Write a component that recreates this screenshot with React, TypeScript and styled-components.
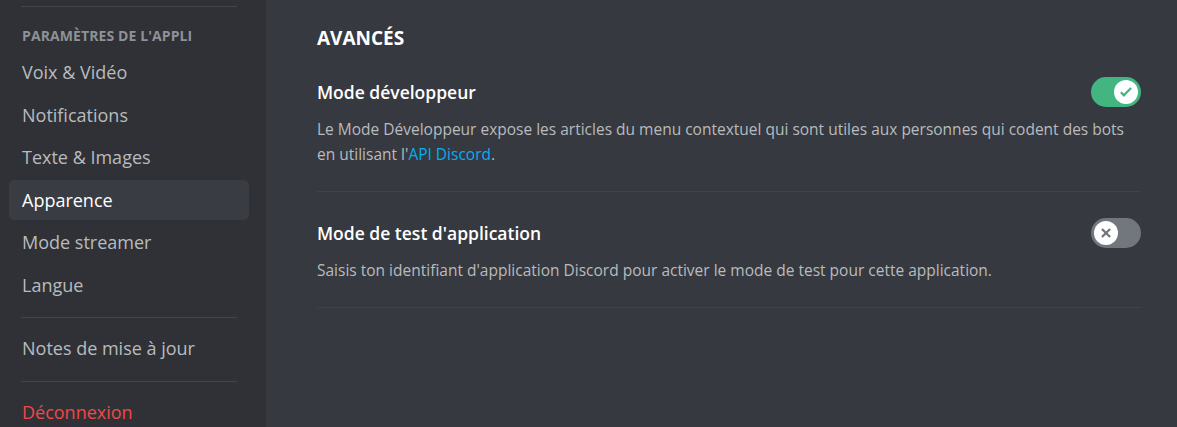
import React from 'react';
import styled, { createGlobalStyle } from 'styled-components';

const GlobalStyle = createGlobalStyle`
    html, body {
        margin: 0;
        padding: 0;
        height: 100%;
        background: #36393f;
    }
    #root {
        height: 100%;
    }
    * {
        box-sizing: border-box;
    }
`;

type NavItem = {
    label: string;
    selected?: boolean;
    danger?: boolean;
};

const appItems: NavItem[] = [
    { label: 'Voix & Vidéo' },
    { label: 'Notifications' },
    { label: 'Texte & Images' },
    { label: 'Apparence', selected: true },
    { label: 'Mode streamer' },
    { label: 'Langue' },
];

const CheckIcon = (
    <svg width='20' height='20' viewBox='0 0 20 20' fill='#43b581'>
        <path d='M7.89561 14.8538L6.30462 13.2629L14.3099 5.25755L15.9009 6.84854L7.89561 14.8538Z' />
        <path d='M4.08643 11.0903L5.67742 9.49929L9.4485 13.2704L7.85751 14.8614L4.08643 11.0903Z' />
    </svg>
);

const CrossIcon = (
    <svg width='20' height='20' viewBox='0 0 20 20' fill='#72767d'>
        <path d='M5.13231 6.72963L6.7233 5.13864L14.855 13.2704L13.264 14.8614L5.13231 6.72963Z' />
        <path d='M13.2704 5.13864L14.8614 6.72963L6.72963 14.8614L5.13864 13.2704L13.2704 5.13864Z' />
    </svg>
);

const Toggle: React.FunctionComponent<{ on: boolean }> = ({ on }) => (
    <Switch on={on}>
        <Knob>{on ? CheckIcon : CrossIcon}</Knob>
    </Switch>
);

type SettingProps = {
    title: string;
    on: boolean;
    children: React.ReactNode;
};

const Setting: React.FunctionComponent<SettingProps> = ({ title, on, children }) => (
    <SettingBlock>
        <SettingRow>
            <SettingTitle>{title}</SettingTitle>
            <Toggle on={on} />
        </SettingRow>
        <SettingNote>{children}</SettingNote>
    </SettingBlock>
);

export default function App() {
    return (
        <Layout>
            <GlobalStyle />
            <Sidebar>
                <Separator />
                <SectionHeader>Paramètres de l'appli</SectionHeader>
                <NavList>
                    {appItems.map((item) => (
                        <NavButton key={item.label} selected={item.selected}>
                            {item.label}
                        </NavButton>
                    ))}
                </NavList>
                <Separator />
                <NavButton>Notes de mise à jour</NavButton>
                <Separator />
                <NavButton danger>Déconnexion</NavButton>
            </Sidebar>
            <Content>
                <PageTitle>Avancés</PageTitle>
                <Setting title='Mode développeur' on>
                    Le Mode Développeur expose les articles du menu contextuel qui sont utiles aux
                    personnes qui codent des bots en utilisant l'<Link href='#'>API Discord</Link>.
                </Setting>
                <Setting title="Mode de test d'application" on={false}>
                    Saisis ton identifiant d'application Discord pour activer le mode de test pour
                    cette application.
                </Setting>
            </Content>
        </Layout>
    );
}

const Layout = styled.div`
    display: flex;
    height: 100%;
    min-height: 427px;
    font-family: 'Open Sans', 'Noto Sans', sans-serif;
    overflow: hidden;
`;

const Sidebar = styled.nav`
    flex: 0 0 266px;
    display: flex;
    flex-direction: column;
    background: #2f3136;
    padding: 6px 17px 0 9px;

    & > * {
        flex-shrink: 0;
    }
`;

const Separator = styled.div`
    height: 1px;
    margin: 10px 12px;
    background: #42454a;

    &:first-child {
        margin-top: 0;
        margin-bottom: 0;
    }
`;

const SectionHeader = styled.h3`
    margin: 0;
    padding: 11px 13px 0;
    height: 45px;
    display: flex;
    align-items: center;
    font-size: 14px;
    font-weight: 700;
    text-transform: uppercase;
    color: #8e9297;
    letter-spacing: 0.1px;
`;

const NavList = styled.div`
    display: flex;
    flex-direction: column;
`;

type NavButtonProps = {
    selected?: boolean;
    danger?: boolean;
};

const NavButton = styled.div<NavButtonProps>`
    flex-shrink: 0;
    height: 40px;
    margin-bottom: 2.5px;
    padding: 0 13px;
    display: flex;
    align-items: center;
    border-radius: 5px;
    font-size: 18px;
    white-space: nowrap;
    color: ${({ selected, danger }) => (danger ? '#f04747' : selected ? '#ffffff' : '#b9bbbe')};
    background: ${({ selected }) => (selected ? '#393c43' : 'transparent')};
`;

const Content = styled.main`
    flex: 1;
    padding: 24px 36px 0 51px;
    color: #dcddde;
`;

const PageTitle = styled.h2`
    margin: 0 0 25px;
    height: 28px;
    display: flex;
    align-items: center;
    font-size: 19px;
    font-weight: 700;
    text-transform: uppercase;
    color: #ffffff;
`;

const SettingBlock = styled.div`
    padding-bottom: 24px;
    margin-bottom: 26px;
    border-bottom: 1px solid #3f4248;
`;

const SettingRow = styled.div`
    display: flex;
    align-items: center;
    justify-content: space-between;
    height: 30px;
`;

const SettingTitle = styled.div`
    font-size: 17.5px;
    font-weight: 600;
    color: #ffffff;
`;

const SettingNote = styled.p`
    margin: 10px 0 0;
    font-size: 15.5px;
    line-height: 25px;
    color: #b9bbbe;
`;

const Link = styled.a`
    color: #00aff4;
    text-decoration: none;
`;

const Switch = styled.div<{ on: boolean }>`
    flex: 0 0 50px;
    height: 30px;
    border-radius: 15px;
    padding: 3px;
    display: flex;
    justify-content: ${({ on }) => (on ? 'flex-end' : 'flex-start')};
    background: ${({ on }) => (on ? '#43b581' : '#72767d')};
`;

const Knob = styled.div`
    width: 24px;
    height: 24px;
    border-radius: 50%;
    background: #ffffff;
    display: flex;
    align-items: center;
    justify-content: center;

    svg {
        width: 20px;
        height: 20px;
    }
`;
